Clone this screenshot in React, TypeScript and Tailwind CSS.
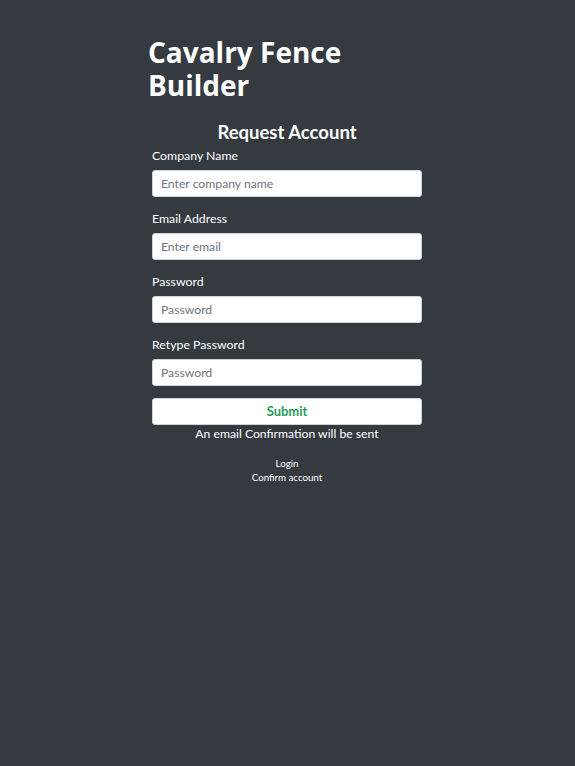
import React from "react";

const fields = [
  { label: "Company Name", placeholder: "Enter company name", type: "text" },
  { label: "Email Address", placeholder: "Enter email", type: "email" },
  { label: "Password", placeholder: "Password", type: "password" },
  { label: "Retype Password", placeholder: "Password", type: "password" },
];

export default function App() {
  return (
    <div className="min-h-screen w-full bg-[#343a40] font-['Lato','Open_Sans',sans-serif] text-white">
      <div className="mx-auto w-[279px] pt-[36px]">
        <h1 className="font-['Open_Sans',sans-serif] text-[28px] font-bold leading-[33px]">Cavalry Fence Builder</h1>

        <div className="pl-[4px] pr-[5px]">
          <h2 className="mt-[18px] text-center text-[18.5px] font-bold leading-[24px]">Request Account</h2>

          <form className="mt-[2px]">
            {fields.map((f) => (
              <div key={f.label} className="mb-[12px]">
                <label className="block text-[12.3px] leading-[20px]">{f.label}</label>
                <input
                  type={f.type}
                  placeholder={f.placeholder}
                  className="mt-[4px] block h-[27px] w-full rounded-[3px] border border-[#ced4da] bg-white px-[8px] text-[12.2px] text-[#495057] placeholder:text-[#6c757d] outline-none"
                />
              </div>
            ))}

            <button
              type="button"
              className="block h-[27px] w-full rounded-[3px] border border-[#ced4da] bg-white pt-[1px] text-[13px] font-bold text-[#2a9d5c]"
            >
              Submit
            </button>
            <p className="text-center text-[12.2px] leading-[18px]">An email Confirmation will be sent</p>
          </form>

          <div className="mt-[13px] flex flex-col items-center text-[9.7px] leading-[14px]">
            <a href="#" className="text-white">Login</a>
            <a href="#" className="text-white">Confirm account</a>
          </div>
        </div>
      </div>
    </div>
  );
}
